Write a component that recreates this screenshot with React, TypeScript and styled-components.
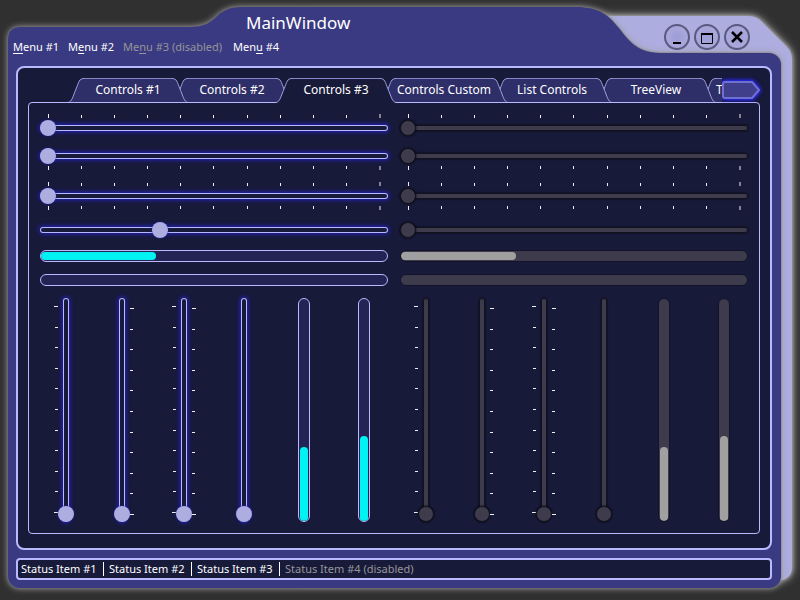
import React, { useState } from "react";
import styled, { createGlobalStyle, css } from "styled-components";

const color = {
  desktop: "#303030",
  frame: "#3a3a82",
  lavender: "#adade0",
  line: "#b9b9ff",
  ink: "#181a3a",
  tab: "#2e2e68",
  trough: "#232454",
  glow: "#2222c0",
  cyan: "#00f3f3",
  off: "#3d3b4c",
  offFill: "#a0a0a0",
  muted: "#969698",
};

const GlobalStyle = createGlobalStyle`
  * { box-sizing: border-box; }
  body {
    margin: 0;
    background: ${color.desktop};
    color: #fff;
    font-family: "Noto Sans", "Open Sans", sans-serif;
    font-size: 12px;
  }
  button { font: inherit; color: inherit; background: none; border: 0; padding: 0; }
`;

/* ---------- window frame ---------- */

const Window = styled.div`
  position: relative;
  display: flex;
  flex-direction: column;
  min-height: 100vh;
  overflow: hidden;
`;

const BackPlate = styled.div`
  position: absolute;
  inset: 16px 8px 20px 300px;
  display: flex;
  flex-direction: column;
  filter: drop-shadow(0 0 2px #b4b4b4) drop-shadow(0 0 4px #a0a0a0);
`;

const FrontPlate = styled.div`
  position: absolute;
  inset: 7px 19px 12px 8px;
  display: flex;
  flex-direction: column;
  filter: drop-shadow(0 0 1px #707070) drop-shadow(0 0 3px #a0a0a0);
`;

const PlateTop = styled.div`
  display: flex;
  svg { display: block; flex: none; }
`;

const Fill = styled.div<{ $color: string }>`
  flex: 1;
  background: ${(p) => p.$color};
`;

const BackBody = styled(Fill)`
  border-bottom-right-radius: 12px;
`;

const FrontBody = styled(Fill)`
  border-radius: 0 12px 12px 12px;
`;

const Cutout = styled.div`
  flex: none;
  width: 121px;
`;

const WindowBody = styled.div`
  position: relative;
  flex: 1;
  display: flex;
  flex-direction: column;
  gap: 8px;
  padding: 0 28px 20px 16px;
`;

const Header = styled.header`
  display: flex;
  justify-content: space-between;
  height: 58px;
`;

const Title = styled.h1`
  margin: 0;
  padding: 11px 0 0 230px;
  font-size: 17px;
  line-height: 24px;
  font-weight: 400;
`;

const MenuBar = styled.nav`
  display: flex;
  gap: 8px;
  margin: 4px 0 0 -3px;
`;

const MenuItem = styled.button`
  font-size: 11px;
  line-height: 16px;
  min-width: 47px;
  text-align: left;
  white-space: nowrap;
  &:disabled { min-width: 102px; color: ${color.muted}; }
  u { text-underline-offset: 2px; }
`;

const WindowButtons = styled.div`
  display: flex;
  gap: 4px;
  padding: 24px 22px 0 0;
`;

const RoundButton = styled.button`
  width: 26px;
  height: 26px;
  border: 2px solid #5a5a80;
  border-radius: 50%;
  background: radial-gradient(circle, #a0a0d8 20%, #a8a8dc 60%, #9696cc 100%);
  svg { display: block; }
`;

/* ---------- tabs ---------- */

const MainPanel = styled.main`
  flex: 1;
  display: flex;
  flex-direction: column;
  border: 2px solid ${color.line};
  border-radius: 8px;
  background: ${color.ink};
  padding: 10px 10px 14px;
`;

const TabRow = styled.div`
  position: relative;
  z-index: 1;
  display: flex;
  align-items: flex-start;
  height: 25px;
  margin-bottom: -1px;
`;

const TabList = styled.div`
  flex: 1;
  min-width: 0;
  display: flex;
  align-items: flex-start;
  overflow: hidden;
  padding-left: 40px;
`;

const Tab = styled.button<{ $order: number; $selected: boolean }>`
  position: relative;
  z-index: ${(p) => p.$order};
  flex: none;
  display: flex;
  margin-right: -16px;
  svg { display: block; flex: none; }
  path { fill: ${(p) => (p.$selected ? color.ink : color.tab)}; }
  path + path { fill: none; stroke: #a0a0e0; }
`;

const TabLabel = styled.span<{ $selected: boolean }>`
  min-width: 88px;
  height: ${(p) => (p.$selected ? 25 : 24)}px;
  border-top: 1px solid #8686c8;
  background: ${(p) => (p.$selected ? color.ink : color.tab)};
  line-height: 22px;
  white-space: nowrap;
`;

const WideLabel = styled(TabLabel)`
  min-width: 96px;
`;

const CutLabel = styled(TabLabel)`
  text-align: left;
`;

const ScrollButton = styled.button`
  flex: none;
  width: 38px;
  margin-top: 3px;
  filter: drop-shadow(0 0 2px #2a2aff) drop-shadow(0 0 1px #2a2aff);
  svg { display: block; }
`;

const TabPanel = styled.section`
  flex: 1;
  display: grid;
  grid-template-columns: 1fr 1fr;
  gap: 12px;
  padding: 11px;
  border: 1px solid ${color.line};
  border-radius: 4px;
`;

/* ---------- sliders and bars ---------- */

const ControlGroup = styled.fieldset`
  min-width: 0;
  margin: 0;
  padding: 0;
  border: 0;
  display: flex;
  flex-direction: column;
  gap: 12px;
`;

const SliderBox = styled.div`
  display: flex;
  flex-direction: column;
  gap: 2px;
`;

const VerticalBox = styled.div`
  display: flex;
  justify-content: center;
  height: 100%;
`;

const VerticalRow = styled.div`
  height: 224px;
  margin: 0 -6px;
  display: grid;
  grid-template-columns: repeat(6, 1fr);
  grid-template-rows: 100%;
`;

const Ticks = styled.div<{ $side: "top" | "bottom" | "left" | "right" }>`
  display: flex;
  justify-content: space-between;
  i { display: block; flex: none; background: #f0f0f0; }
  ${(p) =>
    p.$side === "top" || p.$side === "bottom"
      ? css`
          height: 4px;
          padding: 0 7px 0 8px;
          align-items: ${p.$side === "top" ? "flex-end" : "flex-start"};
          i { width: 1px; height: 3px; }
          i:first-child { height: 4px; }
          i:last-child { width: 2px; height: 4px; background: #85858f; }
        `
      : css`
          flex-direction: column;
          width: 4px;
          padding: ${p.$side === "left" ? "8px 0 9px" : "10px 0 7px"};
          align-items: ${p.$side === "left" ? "flex-end" : "flex-start"};
          i { width: 3px; height: 1px; }
          i:first-child, i:last-child { width: 4px; }
        `}
`;

const trackLook = css`
  border-radius: 3px;
  background: ${color.ink};
  box-shadow: inset 0 0 0 1px ${color.line}, 0 0 4px 1px ${color.glow};
`;

const offTrackLook = css`
  background: ${color.off};
  box-shadow: inset 0 0 0 1px #12121f, 0 0 2px 0 #000;
`;

const thumbLook = css`
  appearance: none;
  width: 16px;
  height: 16px;
  border: 0;
  border-radius: 50%;
  background: ${color.lavender};
  box-shadow: 0 0 2px 0 ${color.glow};
`;

const offThumbLook = css`
  border: 1px solid #14141f;
  background: ${color.off};
  box-shadow: 0 0 2px 0 #000;
`;

const Range = styled.input<{ $vertical?: boolean }>`
  appearance: none;
  display: block;
  margin: 0;
  background: none;
  outline: none;
  ${(p) =>
    p.$vertical
      ? css`
          writing-mode: vertical-lr;
          direction: rtl;
          width: 16px;
          height: 100%;
          &::-webkit-slider-runnable-track { width: 6px; ${trackLook} }
          &::-webkit-slider-thumb { ${thumbLook} margin-left: -5px; }
        `
      : css`
          width: 100%;
          height: 16px;
          &::-webkit-slider-runnable-track { height: 6px; ${trackLook} }
          &::-webkit-slider-thumb { ${thumbLook} margin-top: -5px; }
        `}
  &:disabled::-webkit-slider-runnable-track { ${offTrackLook} }
  &:disabled::-webkit-slider-thumb { ${offThumbLook} }
`;

const Bar = styled.div<{ $vertical?: boolean; $off?: boolean }>`
  display: flex;
  border: 1px solid ${(p) => (p.$off ? "#12132a" : color.line)};
  border-radius: 6px;
  background: ${(p) => (p.$off ? color.off : color.trough)};
  overflow: hidden;
  ${(p) =>
    p.$vertical
      ? css`
          width: 12px;
          height: 100%;
          padding: 0 1px;
          align-items: flex-end;
        `
      : css`
          height: 12px;
          padding: 1px 0;
        `}
`;

const BarFill = styled.div<{ $vertical?: boolean; $off?: boolean; $flat?: boolean }>`
  ${(p) => (p.$vertical ? "width: 8px;" : "height: 8px;")}
  border-radius: ${(p) => (p.$flat ? "4px 4px 0 0" : "4px")};
  background: ${(p) => (p.$off ? color.offFill : color.cyan)};
`;

/* ---------- status bar ---------- */

const StatusBar = styled.footer`
  display: flex;
  align-items: center;
  height: 22px;
  padding-left: 3px;
  border: 2px solid ${color.line};
  border-radius: 4px;
  background: ${color.ink};
  font-size: 11px;
  line-height: 16px;
`;

const StatusItem = styled.span<{ $disabled?: boolean }>`
  min-width: 82px;
  white-space: nowrap;
  color: ${(p) => (p.$disabled ? color.muted : "#fff")};
`;

const StatusDivider = styled.span`
  width: 1px;
  height: 14px;
  margin-right: 5px;
  background: #fff;
`;

const TickMarks = ({ side }: { side: "top" | "bottom" | "left" | "right" }) => (
  <Ticks $side={side} aria-hidden="true">
    {Array.from({ length: 11 }, (_, i) => (
      <i key={i} />
    ))}
  </Ticks>
);

const Slider = ({ label, start, before, after }: { label: string; start: number; before?: boolean; after?: boolean }) => {
  const [value, setValue] = useState(start);
  return (
    <SliderBox>
      {before && <TickMarks side="top" />}
      <Range type="range" min={0} max={100} step="any" aria-label={label} value={value} onChange={(e) => setValue(Number(e.target.value))} />
      {after && <TickMarks side="bottom" />}
    </SliderBox>
  );
};

const VerticalSlider = ({ label, before, after }: { label: string; before?: boolean; after?: boolean }) => {
  const [value, setValue] = useState(0);
  return (
    <VerticalBox>
      {before && <TickMarks side="left" />}
      <Range $vertical type="range" min={0} max={100} aria-label={label} value={value} onChange={(e) => setValue(Number(e.target.value))} />
      {after && <TickMarks side="right" />}
    </VerticalBox>
  );
};

const Progress = ({ label, value, vertical, off, flat }: { label: string; value: number; vertical?: boolean; off?: boolean; flat?: boolean }) => (
  <Bar $vertical={vertical} $off={off} role="progressbar" aria-label={label} aria-valuenow={value}>
    <BarFill $vertical={vertical} $off={off} $flat={flat} style={vertical ? { height: `${value}%` } : { width: `${value}%` }} />
  </Bar>
);

const Controls = ({ off, start }: { off?: boolean; start: number }) => (
  <ControlGroup disabled={off}>
    <Slider label="Ticks above" start={0} before />
    <Slider label="Ticks below" start={0} after />
    <Slider label="Ticks on both sides" start={0} before after />
    <Slider label="No ticks" start={start} />
    <Progress label="Progress" value={33.3} off={off} />
    <Progress label="Empty progress" value={0} off={off} />
    <VerticalRow>
      <VerticalSlider label="Ticks left" before />
      <VerticalSlider label="Ticks right" after />
      <VerticalSlider label="Ticks left and right" before after />
      <VerticalSlider label="Plain vertical" />
      <VerticalBox>
        <Progress label="Vertical progress" value={33.3} vertical off={off} />
      </VerticalBox>
      <VerticalBox>
        <Progress label="Vertical activity" value={38.3} vertical off={off} flat />
      </VerticalBox>
    </VerticalRow>
  </ControlGroup>
);

const tabs = [
  { name: "Controls #1", Label: TabLabel },
  { name: "Controls #2", Label: TabLabel },
  { name: "Controls #3", Label: TabLabel },
  { name: "Controls Custom", Label: WideLabel },
  { name: "List Controls", Label: TabLabel },
  { name: "TreeView", Label: TabLabel },
  { name: "T", Label: CutLabel },
];

const leftEdge = "M0 24.500C4 24 5 18 8 11S11 .5 16 .5";
const rightEdge = "M16 24.500C12 24 11 18 8 11S5 .5 0 .5";

const TabEdge = ({ edge, close, height }: { edge: string; close: string; height: number }) => (
  <svg width="16" height={height} viewBox={`0 0 16 ${height}`}>
    <path d={edge + close} />
    <path d={edge} />
  </svg>
);

export default function App() {
  const [selected, setSelected] = useState(2);
  return (
    <>
      <GlobalStyle />
      <Window>
        <BackPlate aria-hidden="true">
          <PlateTop>
            <Fill $color={color.lavender} />
            <svg width="48" height="48" viewBox="0 0 48 48">
              <path d="M0 0H4Q11 0 16 4L43 31Q48 36 48 44V48H0Z" fill={color.lavender} />
            </svg>
          </PlateTop>
          <BackBody $color={color.lavender} />
        </BackPlate>
        <FrontPlate aria-hidden="true">
          <PlateTop>
            <svg width="240" height="46" viewBox="0 0 240 46">
              <path d="M0 46V33Q0 20 13 20H180C197 20 203 15 208 10S220 0 234 0H240V46Z" fill={color.frame} />
            </svg>
            <Fill $color={color.frame} />
            <svg width="100" height="46" viewBox="0 0 100 46">
              <path d="M0 0H16C40 0 49 9 58 20C67 31 76 46 100 46H0Z" fill={color.frame} />
            </svg>
            <Cutout />
          </PlateTop>
          <FrontBody $color={color.frame} />
        </FrontPlate>
        <WindowBody>
          <Header>
            <div>
              <Title>MainWindow</Title>
              <MenuBar>
                <MenuItem><u>M</u>enu #1</MenuItem>
                <MenuItem>M<u>e</u>nu #2</MenuItem>
                <MenuItem disabled>Me<u>n</u>u #3 (disabled)</MenuItem>
                <MenuItem>Men<u>u</u> #4</MenuItem>
              </MenuBar>
            </div>
            <WindowButtons>
              <RoundButton aria-label="Minimize">
                <svg width="22" height="22" viewBox="0 0 22 22"><path d="M7 17H15" stroke="#000" strokeWidth="2" /></svg>
              </RoundButton>
              <RoundButton aria-label="Maximize">
                <svg width="22" height="22" viewBox="0 0 22 22"><path d="M5.500 8V17.500H16.500V8" fill="none" stroke="#000" strokeWidth="1" /><path d="M5 8H17" stroke="#000" strokeWidth="2" /></svg>
              </RoundButton>
              <RoundButton aria-label="Close">
                <svg width="22" height="22" viewBox="0 0 22 22"><path d="M6 6L16 16M16 6L6 16" stroke="#000" strokeWidth="2.500" /></svg>
              </RoundButton>
            </WindowButtons>
          </Header>
          <MainPanel>
            <TabRow>
              <TabList role="tablist">
                {tabs.map(({ name, Label }, i) => {
                  const on = i === selected;
                  const height = on ? 25 : 24;
                  return (
                    <Tab key={name} role="tab" aria-selected={on} $selected={on} $order={on ? 20 : 10 - i} onClick={() => setSelected(i)}>
                      <TabEdge edge={leftEdge} close="V25H0Z" height={height} />
                      <Label $selected={on}>{name}</Label>
                      <TabEdge edge={rightEdge} close="V25H16Z" height={height} />
                    </Tab>
                  );
                })}
              </TabList>
              <ScrollButton aria-label="More tabs">
                <svg width="38" height="18" viewBox="0 0 38 18">
                  <path d="M3 1H30L37 9L30 17H3Q1 17 1 15V3Q1 1 3 1Z" fill="#3f3f8c" stroke="#7070d0" strokeWidth="2" strokeLinejoin="round" />
                </svg>
              </ScrollButton>
            </TabRow>
            <TabPanel role="tabpanel" aria-label={tabs[selected].name}>
              <Controls start={33.7} />
              <Controls start={0} off />
            </TabPanel>
          </MainPanel>
          <StatusBar>
            <StatusItem>Status Item #1</StatusItem>
            <StatusDivider />
            <StatusItem>Status Item #2</StatusItem>
            <StatusDivider />
            <StatusItem>Status Item #3</StatusItem>
            <StatusDivider />
            <StatusItem $disabled>Status Item #4 (disabled)</StatusItem>
          </StatusBar>
        </WindowBody>
      </Window>
    </>
  );
}
